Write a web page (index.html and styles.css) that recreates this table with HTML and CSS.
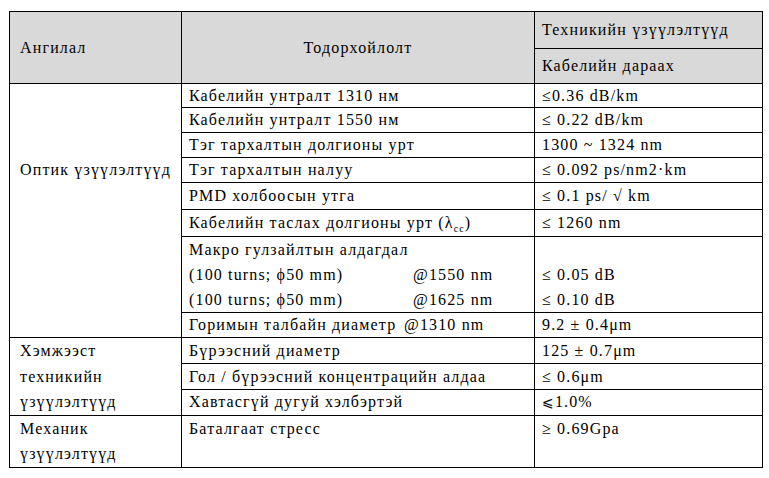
FILE: index.html
```html
<!DOCTYPE html>
<html>
<head>
<meta charset="utf-8">
<title>Техникийн үзүүлэлтүүд</title>
<link rel="stylesheet" href="styles.css">
</head>
<body>
<table class="spec">
  <colgroup>
    <col class="c-cat">
    <col class="c-desc">
    <col class="c-val">
  </colgroup>
  <thead>
    <tr class="h-top">
      <th rowspan="2" class="cat-head">Ангилал</th>
      <th rowspan="2" class="desc-head">Тодорхойлолт</th>
      <th class="val-head">Техникийн үзүүлэлтүүд</th>
    </tr>
    <tr class="h-bot">
      <th class="val-head">Кабелийн дараах</th>
    </tr>
  </thead>
  <tbody>
    <tr class="r-first">
      <td rowspan="8" class="cat optic">Оптик үзүүлэлтүүд</td>
      <td>Кабелийн унтралт 1310 нм</td>
      <td>≤0.36 dB/km</td>
    </tr>
    <tr>
      <td>Кабелийн унтралт 1550 нм</td>
      <td>≤ 0.22 dB/km</td>
    </tr>
    <tr>
      <td>Тэг тархалтын долгионы урт</td>
      <td>1300 ~ 1324 nm</td>
    </tr>
    <tr>
      <td>Тэг тархалтын налуу</td>
      <td>≤ 0.092 ps/nm2·km</td>
    </tr>
    <tr class="r-tall">
      <td>PMD холбоосын утга</td>
      <td>≤ 0.1 ps/ √ km</td>
    </tr>
    <tr class="r-tall">
      <td>Кабелийн таслах долгионы урт (λ<sub>cc</sub>)</td>
      <td>≤ 1260 nm</td>
    </tr>
    <tr class="r-multi">
      <td>
        <div>Макро гулзайлтын алдагдал</div>
        <div><span class="lbl">(100 turns; ϕ50 mm)</span><span>@1550 nm</span></div>
        <div><span class="lbl">(100 turns; ϕ50 mm)</span><span>@1625 nm</span></div>
      </td>
      <td>
        <div>&nbsp;</div>
        <div>≤ 0.05 dB</div>
        <div>≤ 0.10 dB</div>
      </td>
    </tr>
    <tr>
      <td><span class="lbl-short">Горимын талбайн диаметр</span><span>@1310 nm</span></td>
      <td>9.2 ± 0.4μm</td>
    </tr>
    <tr class="r-26">
      <td rowspan="3" class="cat geom">Хэмжээст<br>техникийн<br>үзүүлэлтүүд</td>
      <td>Бүрээсний диаметр</td>
      <td>125 ± 0.7μm</td>
    </tr>
    <tr class="r-26">
      <td>Гол / бүрээсний концентрацийн алдаа</td>
      <td>≤ 0.6μm</td>
    </tr>
    <tr>
      <td>Хавтасгүй дугуй хэлбэртэй</td>
      <td><span class="slant">⩽</span>1.0%</td>
    </tr>
    <tr class="r-mech">
      <td class="cat mech">Механик<br>үзүүлэлтүүд</td>
      <td class="top">Баталгаат стресс</td>
      <td class="top">≥ 0.69Gpa</td>
    </tr>
  </tbody>
</table>
</body>
</html>
```

FILE: styles.css
```css
html, body {
  margin: 0;
  padding: 0;
  background: #ffffff;
}

body {
  font-family: "Liberation Serif", "DejaVu Serif", serif;
  font-size: 16px;
  color: #000000;
}

.spec {
  border-collapse: collapse;
  table-layout: fixed;
  width: 753px;
  margin: 11px 0 0 9px;
  letter-spacing: 1.15px;
}

.c-cat { width: 172px; }
.c-desc { width: 353px; }
.c-val { width: 228px; }

.spec th,
.spec td {
  border: 1px solid #000000;
  padding: 0 7px;
  line-height: 24px;
  text-align: left;
  vertical-align: middle;
  font-weight: normal;
  white-space: nowrap;
}

.spec th {
  background: #d9d9d9;
}

.spec .cat-head {
  padding-left: 10px;
}

.spec .desc-head {
  text-align: center;
}

.h-top th.val-head {
  line-height: 36px;
}

.h-bot th.val-head {
  line-height: 34px;
}

.spec td.cat {
  vertical-align: top;
  padding-left: 10px;
}

.spec td.optic {
  padding-top: 74px;
}

.spec td.geom {
  line-height: 25.5px;
}

.spec td.mech {
  line-height: 25px;
}

.r-first td {
  line-height: 23px;
}

.r-tall td {
  line-height: 26px;
}

.r-multi td {
  line-height: 25px;
}

.r-26 td {
  line-height: 25px;
}

.r-mech td {
  line-height: 25px;
  height: 51px;
}

.spec td.top {
  vertical-align: top;
}

.lbl {
  display: inline-block;
  width: 224px;
}

.lbl-short {
  display: inline-block;
  width: 215px;
}

.slant {
  font-family: "DejaVu Sans", sans-serif;
  font-size: 14px;
}

sub {
  font-size: 10px;
  line-height: 0;
}
```
